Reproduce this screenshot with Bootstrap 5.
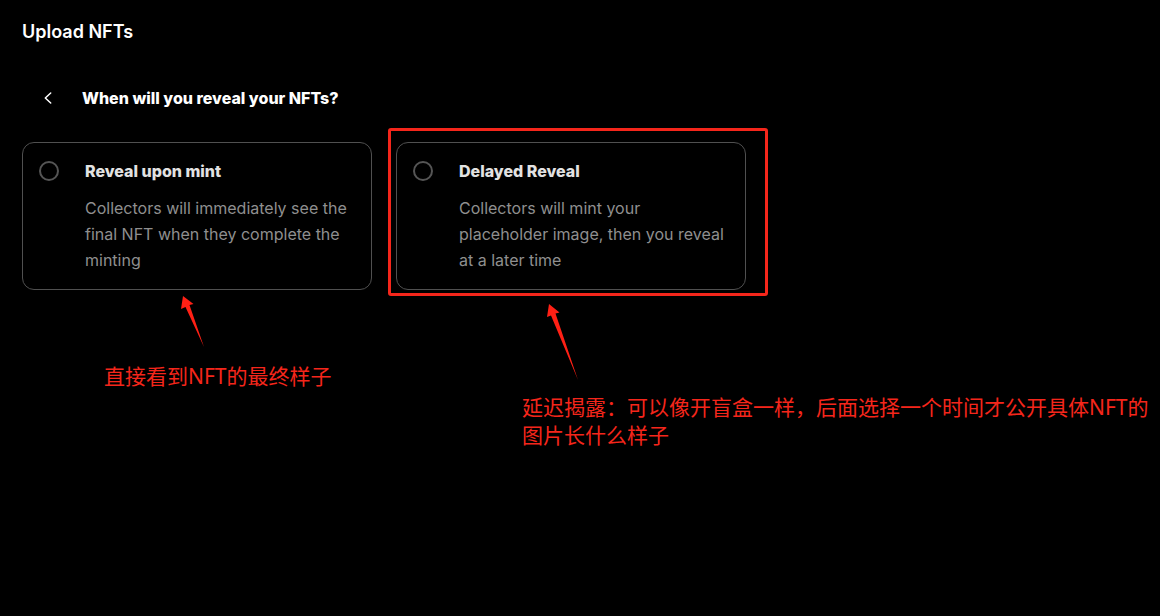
<!DOCTYPE html>
<html lang="en" data-bs-theme="dark">
<head>
<meta charset="utf-8">
<meta name="viewport" content="width=device-width, initial-scale=1">
<title>Upload NFTs</title>
<link href="https://cdn.jsdelivr.net/npm/bootstrap@5.3.0/dist/css/bootstrap.min.css" rel="stylesheet">
<style>
  body { background: #000; color: #f7f7f7; font-family: Inter, "Liberation Sans", sans-serif; }
  .page-pad { padding: 20px 0 24px 22px; }
  .page-title { font-size: 18px; line-height: 24px; font-weight: 600; }
  .step-head { gap: 8px; margin-top: 28px; }
  .back-btn { width: 52px; height: 52px; color: #fff; }
  .step-title { font-size: 16px; line-height: 24px; font-weight: 800; }
  .reveal-grid { grid-template-columns: minmax(0, 350px) minmax(0, 1fr); column-gap: 24px; margin-top: 18px; }
  .option-box { max-width: 350px; }
  .option-card { gap: 26px; padding: 16px; border: 1px solid #505050; border-radius: 12px; cursor: pointer; }
  .option-radio { appearance: none; width: 20px; height: 20px; margin: 2px 0 0; border: 2px solid #555; border-radius: 50%; }
  .option-radio:checked { border-color: #fff; box-shadow: inset 0 0 0 4px #000; background: #fff; }
  .option-title { font-size: 16px; line-height: 24px; font-weight: 800; color: #e2e2e2; margin-bottom: 12px; }
  .option-desc { font-size: 16px; line-height: 26px; color: #8f8f8f; }
  .callout-frame { inset: -14px -22px -6px -8px; border: 3px solid #f5261b; border-radius: 3px; pointer-events: none; }
  .note { color: #f5261b; font-family: "Noto Sans", "Noto Sans CJK SC", sans-serif; font-size: 21px; line-height: 28px; font-weight: 400; }
  .note svg { fill: #ff2015; }
  .note-mint { padding: 5px 0 0 82px; }
  .note-mint svg { margin: 0 0 13px 76px; }
  .note-delay { padding: 13px 0 0 126px; }
  .note-delay svg { margin: 0 0 12px 22px; }
</style>
</head>
<body>
<main class="page-pad">
  <h1 class="page-title mb-0">Upload NFTs</h1>
  <div class="step-head d-flex align-items-center">
    <button type="button" class="back-btn btn p-0 border-0 d-flex align-items-center justify-content-center" aria-label="Back">
      <svg width="16" height="16" viewBox="0 0 16 16" fill="none" stroke="currentColor" stroke-width="1.5" stroke-linecap="round" stroke-linejoin="round" aria-hidden="true"><path d="M10.700 3 5.300 8l5.400 5"/></svg>
    </button>
    <h2 class="step-title mb-0" id="step">When will you reveal your NFTs?</h2>
  </div>
  <div class="reveal-grid d-grid" role="radiogroup" aria-labelledby="step">
    <section>
      <div class="option-box">
        <label class="option-card d-flex align-items-start" for="upon-mint">
          <input class="option-radio flex-shrink-0" type="radio" name="reveal" id="upon-mint">
          <span>
            <span class="option-title d-block">Reveal upon mint</span>
            <span class="option-desc d-block">Collectors will immediately see the final NFT when they complete the minting</span>
          </span>
        </label>
      </div>
      <div class="note note-mint" lang="zh-CN">
        <svg class="d-block" width="26" height="54" viewBox="0 0 26 54" aria-hidden="true"><path d="M3 1 13.500 9 9.500 10 24 52 5.500 12 1 14Z"/></svg>
        <p class="mb-0">直接看到NFT的最终样子</p>
      </div>
    </section>
    <section>
      <div class="option-box position-relative">
        <label class="option-card d-flex align-items-start" for="delayed">
          <input class="option-radio flex-shrink-0" type="radio" name="reveal" id="delayed">
          <span>
            <span class="option-title d-block">Delayed Reveal</span>
            <span class="option-desc d-block">Collectors will mint your placeholder image, then you reveal at a later time</span>
          </span>
        </label>
        <div class="callout-frame position-absolute"></div>
      </div>
      <div class="note note-delay" lang="zh-CN">
        <svg class="d-block" width="36" height="78" viewBox="0 0 36 78" aria-hidden="true"><path d="M5 1 15.500 9.500 11.500 10.500 34 77 7 12.500 3 14Z"/></svg>
        <p class="mb-0">延迟揭露：可以像开盲盒一样，后面选择一个时间才公开具体NFT的图片长什么样子</p>
      </div>
    </section>
  </div>
</main>
<script src="https://cdn.jsdelivr.net/npm/bootstrap@5.3.0/dist/js/bootstrap.bundle.min.js"></script>
</body>
</html>
